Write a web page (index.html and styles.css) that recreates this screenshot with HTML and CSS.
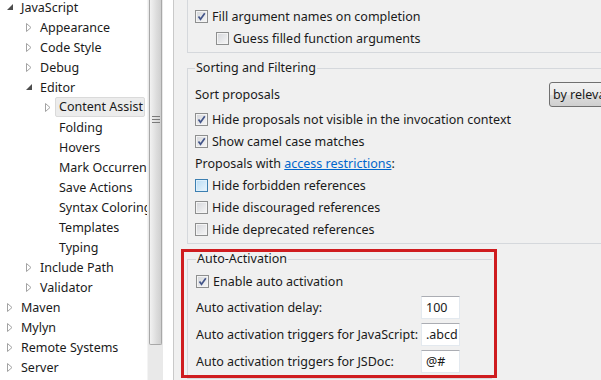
FILE: index.html
```html
<!DOCTYPE html>
<html lang="en">
<head>
  <meta charset="UTF-8">
  <title>Preferences - Content Assist</title>
  <link rel="stylesheet" href="styles.css">
</head>
<body>
  <div class="window">
    <div class="nav">
      <ul class="tree">
        <li class="lvl0"><span class="twisty"><svg width="6" height="6" viewBox="0 0 6 6"><polygon points="6,0 6,6 0,6" fill="#4d4d4d"/></svg></span>JavaScript</li>
        <li class="lvl1"><span class="twisty"><svg width="6" height="9" viewBox="0 0 6 9"><polygon points="0.5,0.5 5,4.5 0.5,8.5" fill="#fff" stroke="#a2a2a2"/></svg></span>Appearance</li>
        <li class="lvl1"><span class="twisty"><svg width="6" height="9" viewBox="0 0 6 9"><polygon points="0.5,0.5 5,4.5 0.5,8.5" fill="#fff" stroke="#a2a2a2"/></svg></span>Code Style</li>
        <li class="lvl1"><span class="twisty"><svg width="6" height="9" viewBox="0 0 6 9"><polygon points="0.5,0.5 5,4.5 0.5,8.5" fill="#fff" stroke="#a2a2a2"/></svg></span>Debug</li>
        <li class="lvl1"><span class="twisty"><svg width="6" height="6" viewBox="0 0 6 6"><polygon points="6,0 6,6 0,6" fill="#4d4d4d"/></svg></span>Editor</li>
        <li class="lvl2"><span class="twisty"><svg width="6" height="9" viewBox="0 0 6 9"><polygon points="0.5,0.5 5,4.5 0.5,8.5" fill="#fff" stroke="#a2a2a2"/></svg></span><span class="label selected">Content Assist</span></li>
        <li class="lvl2 leaf">Folding</li>
        <li class="lvl2 leaf">Hovers</li>
        <li class="lvl2 leaf">Mark Occurrences</li>
        <li class="lvl2 leaf">Save Actions</li>
        <li class="lvl2 leaf">Syntax Coloring</li>
        <li class="lvl2 leaf">Templates</li>
        <li class="lvl2 leaf">Typing</li>
        <li class="lvl1"><span class="twisty"><svg width="6" height="9" viewBox="0 0 6 9"><polygon points="0.5,0.5 5,4.5 0.5,8.5" fill="#fff" stroke="#a2a2a2"/></svg></span>Include Path</li>
        <li class="lvl1"><span class="twisty"><svg width="6" height="9" viewBox="0 0 6 9"><polygon points="0.5,0.5 5,4.5 0.5,8.5" fill="#fff" stroke="#a2a2a2"/></svg></span>Validator</li>
        <li class="lvl0"><span class="twisty"><svg width="6" height="9" viewBox="0 0 6 9"><polygon points="0.5,0.5 5,4.5 0.5,8.5" fill="#fff" stroke="#a2a2a2"/></svg></span>Maven</li>
        <li class="lvl0"><span class="twisty"><svg width="6" height="9" viewBox="0 0 6 9"><polygon points="0.5,0.5 5,4.5 0.5,8.5" fill="#fff" stroke="#a2a2a2"/></svg></span>Mylyn</li>
        <li class="lvl0"><span class="twisty"><svg width="6" height="9" viewBox="0 0 6 9"><polygon points="0.5,0.5 5,4.5 0.5,8.5" fill="#fff" stroke="#a2a2a2"/></svg></span>Remote Systems</li>
        <li class="lvl0"><span class="twisty"><svg width="6" height="9" viewBox="0 0 6 9"><polygon points="0.5,0.5 5,4.5 0.5,8.5" fill="#fff" stroke="#a2a2a2"/></svg></span>Server</li>
      </ul>
    </div>
    <div class="vscroll">
      <div class="thumb"><span class="grip"></span></div>
    </div>
    <div class="sash"></div>

    <div class="page">
      <div class="page-body">
        <fieldset class="group group-top">
          <div class="row"><span class="cb checked"><svg width="11" height="11" viewBox="0 0 11 11"><path d="M2.5 5.5 L4.5 8.2 L8.8 2.2" fill="none" stroke="#44568a" stroke-width="1.7"/></svg></span>Fill argument names on completion</div>
          <div class="row sub"><span class="cb"></span>Guess filled function arguments</div>
        </fieldset>

        <fieldset class="group">
          <legend>Sorting and Filtering</legend>
          <div class="row sort-row">
            <span>Sort proposals</span>
            <span class="combo">by relevance</span>
          </div>
          <div class="row"><span class="cb checked"><svg width="11" height="11" viewBox="0 0 11 11"><path d="M2.5 5.5 L4.5 8.2 L8.8 2.2" fill="none" stroke="#44568a" stroke-width="1.7"/></svg></span>Hide proposals not visible in the invocation context</div>
          <div class="row"><span class="cb checked"><svg width="11" height="11" viewBox="0 0 11 11"><path d="M2.5 5.5 L4.5 8.2 L8.8 2.2" fill="none" stroke="#44568a" stroke-width="1.7"/></svg></span>Show camel case matches</div>
          <div class="row">Proposals with&nbsp;<a class="link" href="#">access restrictions</a>:</div>
          <div class="row"><span class="cb hover"></span>Hide forbidden references</div>
          <div class="row"><span class="cb"></span>Hide discouraged references</div>
          <div class="row"><span class="cb"></span>Hide deprecated references</div>
        </fieldset>

        <fieldset class="group group-auto">
          <legend>Auto-Activation</legend>
          <div class="row first"><span class="cb checked"><svg width="11" height="11" viewBox="0 0 11 11"><path d="M2.5 5.5 L4.5 8.2 L8.8 2.2" fill="none" stroke="#44568a" stroke-width="1.7"/></svg></span>Enable auto activation</div>
          <div class="field-row delay">
            <span>Auto activation delay:</span>
            <span class="text-field">100</span>
          </div>
          <div class="field-row">
            <span>Auto activation triggers for JavaScript:</span>
            <span class="text-field">.abcd</span>
          </div>
          <div class="field-row">
            <span>Auto activation triggers for JSDoc:</span>
            <span class="text-field">@#</span>
          </div>
        </fieldset>
      </div>
      <div class="highlight"></div>
    </div>
  </div>
</body>
</html>
```

FILE: styles.css
```css
* {
  margin: 0;
  padding: 0;
  box-sizing: border-box;
}

:root {
  --panel-bg: #f0f0f0;
  --group-line: #d5d8dc;
  --text: #1a1a1a;
  --link: #0066cc;
  --mark: #cf1c1f;
}

body {
  font-family: "Noto Sans", "Open Sans", sans-serif;
  font-size: 12.5px;
  color: var(--text);
  background-color: var(--panel-bg);
  width: 601px;
  height: 380px;
  overflow: hidden;
}

.window {
  display: flex;
  height: 380px;
}

/* preference tree */
.nav {
  width: 147px;
  flex: none;
  background-color: #fff;
  overflow: hidden;
}

.tree {
  list-style: none;
  margin-top: -3px;
}

.tree li {
  height: 20px;
  display: flex;
  align-items: center;
  white-space: nowrap;
}

.lvl0 { padding-left: 7px; }
.lvl1 { padding-left: 26px; }
.lvl2 { padding-left: 45px; }
.tree li.leaf { padding-left: 59px; }

.twisty {
  width: 14px;
  flex: none;
  display: flex;
  align-items: center;
}

.label.selected {
  margin-left: -4px;
  padding: 0 3px;
  height: 20px;
  line-height: 18px;
  width: 90px;
  background-color: #ececec;
  border: 1px solid #dadada;
  border-radius: 2px;
}

/* scrollbar */
.vscroll {
  width: 16px;
  flex: none;
  background-color: #e9e9e9;
  border-left: 1px solid #f4f4f4;
}

.thumb {
  height: 345px;
  margin: 0 1px;
  border: 1px solid #a8a8a8;
  border-top: none;
  border-radius: 0 0 2px 2px;
  background: linear-gradient(to right, #f2f2f2, #dcdcdc 60%, #cfcfcf);
  display: flex;
  justify-content: center;
  padding-top: 116px;
}

.grip {
  width: 8px;
  height: 9px;
  background: repeating-linear-gradient(to bottom, #7a7a7a 0, #7a7a7a 1px, transparent 1px, transparent 3px);
}

.sash {
  width: 11px;
  flex: none;
  background-color: #fff;
  border-right: 1px solid #c9c9c9;
}

/* preference page */
.page {
  flex: 1;
  position: relative;
  overflow: hidden;
}

.page-body {
  width: 470px;
  padding-left: 13px;
}

.group {
  border: 1px solid var(--group-line);
  border-right: none;
  padding: 0 10px 3px 7px;
}

.group legend {
  line-height: 16px;
  padding: 0 1px;
  margin-left: 0;
}

.group + .group {
  margin-top: 7px;
}

.group-top {
  border-top: none;
  padding-top: 5px;
}

.row {
  height: 22px;
  display: flex;
  align-items: center;
  white-space: nowrap;
}

.row.sub {
  padding-left: 21px;
}

.sort-row {
  height: 27px;
  margin-top: 5px;
  justify-content: space-between;
}

.combo {
  width: 85px;
  height: 25px;
  line-height: 23px;
  padding-left: 3px;
  overflow: hidden;
  white-space: nowrap;
  border: 1px solid #707070;
  border-radius: 3px;
  background: linear-gradient(to bottom, #f2f2f2, #ebebeb 50%, #dddddd 51%, #cfcfcf);
}

.cb {
  width: 13px;
  height: 13px;
  flex: none;
  margin-right: 4px;
  border: 1px solid #8e8f8f;
  background: linear-gradient(135deg, #d4d6da, #f7f7f7);
  box-shadow: inset 0 0 0 1px #f4f4f4;
  display: flex;
  align-items: center;
  justify-content: center;
}

.cb.hover {
  border-color: #3c7fb1;
  background: linear-gradient(135deg, #b9dcf4, #e9f5fd);
  box-shadow: inset 0 0 0 1px #def0fc;
}

.link {
  color: var(--link);
  text-decoration: underline;
}

.group-auto {
  margin-right: 152px;
  padding-left: 8px;
}

.group-auto .row.first {
  margin-top: 3px;
}

.field-row {
  height: 27px;
  display: grid;
  grid-template-columns: 225px 39px;
  align-items: center;
  white-space: nowrap;
}

.field-row.delay {
  margin-top: 2px;
}

.text-field {
  height: 23px;
  line-height: 21px;
  padding-left: 4px;
  background-color: #fff;
  border: 1px solid #e3e9ef;
  border-top-color: #abadb3;
  overflow: hidden;
}

/* annotation box drawn over the screenshot */
.highlight {
  position: absolute;
  left: 7px;
  top: 249px;
  width: 316px;
  height: 129px;
  border: 3px solid var(--mark);
}
```
